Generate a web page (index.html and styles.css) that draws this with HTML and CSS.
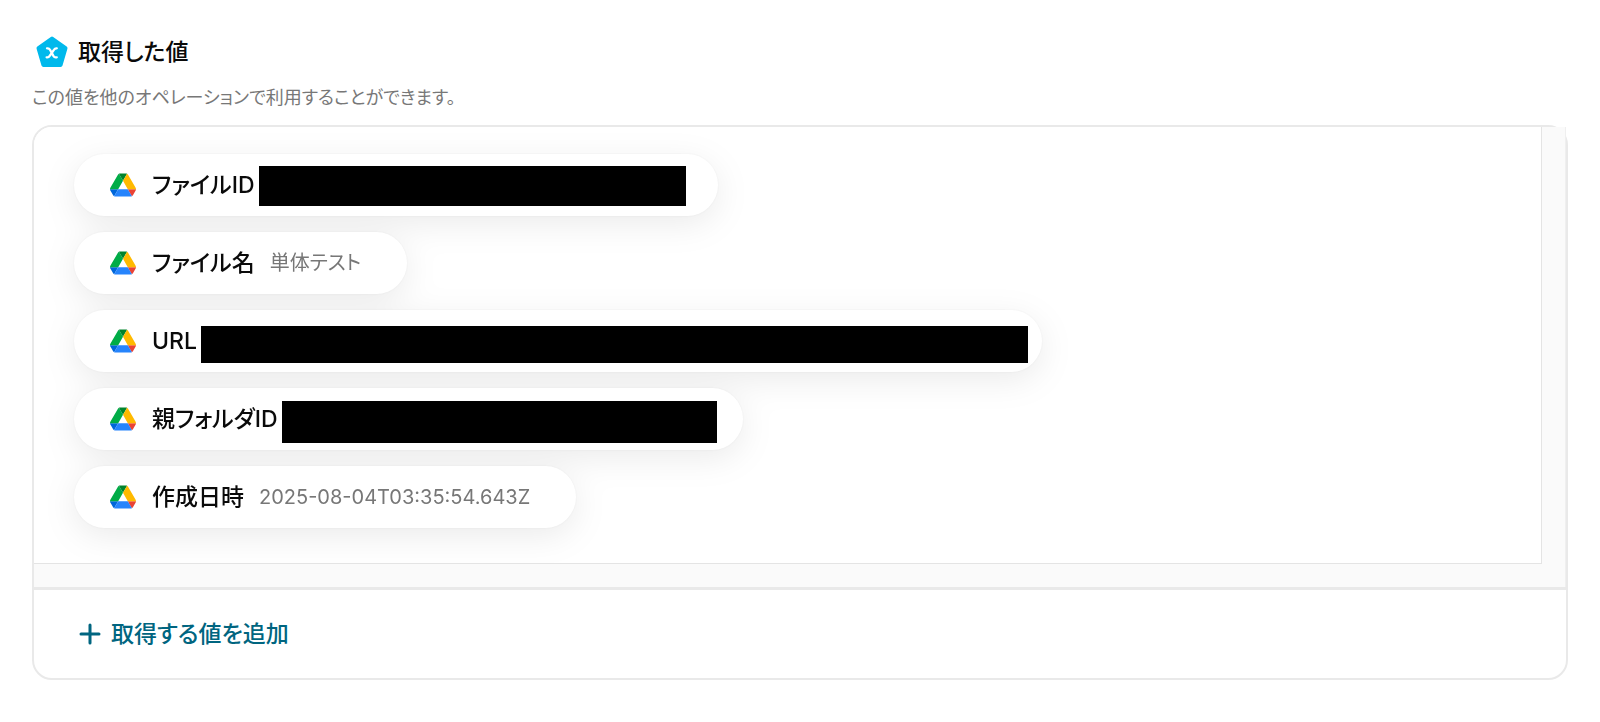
FILE: index.html
```html
<!DOCTYPE html>
<html lang="ja">
<head>
  <meta charset="UTF-8">
  <meta name="viewport" content="width=device-width, initial-scale=1.0">
  <title>取得した値</title>
  <link rel="stylesheet" href="styles.css">
</head>
<body>
  <!-- Shared service icon -->
  <svg class="sprite" aria-hidden="true">
    <symbol id="drive" viewBox="0 0 87.3 78">
      <path fill="#0066da" d="M6.6 66.85l3.85 6.65c.8 1.4 1.95 2.5 3.3 3.3L27.5 53H0c0 1.55.4 3.1 1.2 4.5z"/>
      <path fill="#00ac47" d="M43.65 25L29.9 1.2c-1.35.8-2.5 1.9-3.3 3.3L1.2 48.5C.4 49.9 0 51.45 0 53h27.5z"/>
      <path fill="#ea4335" d="M73.55 76.8c1.35-.8 2.5-1.9 3.3-3.3l1.6-2.75L86.1 57.5c.8-1.4 1.2-2.95 1.2-4.5H59.8l5.85 11.5z"/>
      <path fill="#00832d" d="M43.65 25L57.4 1.2C56.05.4 54.5 0 52.9 0H34.4c-1.6 0-3.15.45-4.5 1.2z"/>
      <path fill="#2684fc" d="M59.8 53H27.5L13.75 76.8c1.35.8 2.9 1.2 4.5 1.2h50.8c1.6 0 3.15-.45 4.5-1.2z"/>
      <path fill="#ffba00" d="M73.4 26.5L60.7 4.5c-.8-1.4-1.95-2.5-3.3-3.3L43.65 25 59.8 53h27.45c0-1.55-.4-3.1-1.2-4.5z"/>
    </symbol>
  </svg>

  <main class="output">
    <div class="output-header">
      <svg class="output-icon" viewBox="0 0 32 32" aria-hidden="true">
        <path d="M16 2.5L29.5 12.2 24.6 29H7.4L2.5 12.2z" fill="#00b9ec" stroke="#00b9ec" stroke-width="4" stroke-linejoin="round"/>
        <path d="M11 12.300h.8c1.200 0 1.700.6 2.200 1.500l3.400 6c.6 1 1.100 1.500 2.200 1.500h1.200M20.800 12.300h-.6c-1.100 0-1.700.6-2.300 1.500l-4.200 6c-.6 1-1.200 1.500-2.300 1.500h-.8" fill="none" stroke="#fff" stroke-width="2.300" stroke-linecap="round"/>
      </svg>
      <h1>取得した値</h1>
    </div>
    <p class="output-note">この値を他のオペレーションで利用することができます。</p>

    <section class="card">
      <div class="scroll-area">
        <div class="viewport">
          <ul class="chips">
            <li class="chip">
              <svg class="chip-icon" aria-hidden="true"><use href="#drive"/></svg>
              <span class="chip-label">ファイルID</span>
              <span class="redacted redacted-file"></span>
            </li>
            <li class="chip">
              <svg class="chip-icon" aria-hidden="true"><use href="#drive"/></svg>
              <span class="chip-label">ファイル名</span>
              <span class="chip-value">単体テスト</span>
            </li>
            <li class="chip">
              <svg class="chip-icon" aria-hidden="true"><use href="#drive"/></svg>
              <span class="chip-label">URL</span>
              <span class="redacted redacted-url"></span>
            </li>
            <li class="chip">
              <svg class="chip-icon" aria-hidden="true"><use href="#drive"/></svg>
              <span class="chip-label">親フォルダID</span>
              <span class="redacted redacted-folder"></span>
            </li>
            <li class="chip">
              <svg class="chip-icon" aria-hidden="true"><use href="#drive"/></svg>
              <span class="chip-label">作成日時</span>
              <span class="chip-value">2025-08-04T03:35:54.643Z</span>
            </li>
          </ul>
        </div>
      </div>
      <div class="card-footer">
        <button type="button" class="add-button">
          <svg class="add-icon" viewBox="0 0 22 22" aria-hidden="true">
            <path d="M11 2v18M2 11h18" fill="none" stroke="currentColor" stroke-width="3" stroke-linecap="round"/>
          </svg>
          取得する値を追加
        </button>
      </div>
    </section>
  </main>
</body>
</html>
```

FILE: styles.css
```css
* {
  margin: 0;
  padding: 0;
  box-sizing: border-box;
}
body {
  background-color: #fff;
  color: #0a0a0a;
  font-family: Inter, 'Noto Sans CJK JP', sans-serif;
  font-feature-settings: "palt";
}
.sprite {
  display: none;
}
.output {
  padding: 32px;
}

/* Heading */
.output-header {
  display: flex;
  align-items: center;
  gap: 10px;
  height: 40px;
  padding-left: 4px;
}
.output-icon {
  width: 32px;
  height: 32px;
}
.output-header h1 {
  font-size: 23px;
  font-weight: 500;
  line-height: 38px;
}
.output-note {
  margin: 12px 0 13px;
  font-size: 18px;
  line-height: 28px;
  color: #777;
}

/* Card */
.card {
  border: 2px solid #e9e9e9;
  border-radius: 20px;
}
/* Gutters on the right and bottom are the scrollbar tracks */
.scroll-area {
  padding: 0 23px 23px 0;
  border-right: 1px solid #efefef;
  border-radius: 18px 0 0 0;
  background-color: #fafafa;
}
.viewport {
  padding: 27px 40px 35px;
  border-right: 1px solid #e4e4e4;
  border-bottom: 1px solid #e4e4e4;
  border-radius: 18px 0 0 0;
  background-color: #fff;
  overflow: hidden;
}

/* Value chips */
.chips {
  display: flex;
  flex-direction: column;
  align-items: flex-start;
  gap: 16px;
  list-style: none;
  filter: drop-shadow(0 8px 16px rgba(0, 0, 0, 0.08)) drop-shadow(0 0 1px rgba(0, 0, 0, 0.05));
}
.chip {
  display: flex;
  align-items: center;
  height: 62px;
  padding: 0 46px 0 36px;
  border-radius: 31px;
  background-color: #fff;
}
.chip-icon {
  width: 26px;
  height: 24px;
  margin-right: 16px;
}
.chip-label {
  font-size: 23px;
  font-weight: 500;
  line-height: 32px;
}
.chip-value {
  margin-left: 15px;
  font-size: 20px;
  line-height: 32px;
  color: #777;
}
.redacted {
  height: 40px;
  margin-top: 2px;
  margin-left: 4px;
  background-color: #000;
}
.redacted-file {
  width: 427px;
  margin-right: -14px;
}
.redacted-url {
  width: 827px;
  height: 37px;
  margin-top: 6px;
  margin-right: -32px;
}
.redacted-folder {
  width: 435px;
  height: 42px;
  margin-top: 6px;
  margin-right: -20px;
}

/* Footer */
.card-footer {
  padding: 24px 45px;
  border-top: 3px solid #e9e9e9;
}
.add-button {
  display: flex;
  align-items: center;
  gap: 10px;
  height: 40px;
  border: none;
  background: none;
  color: #006580;
  font-family: inherit;
  font-size: 23px;
  font-weight: 500;
  line-height: 32px;
  font-feature-settings: inherit;
  cursor: pointer;
}
.add-icon {
  width: 22px;
  height: 22px;
}
```
